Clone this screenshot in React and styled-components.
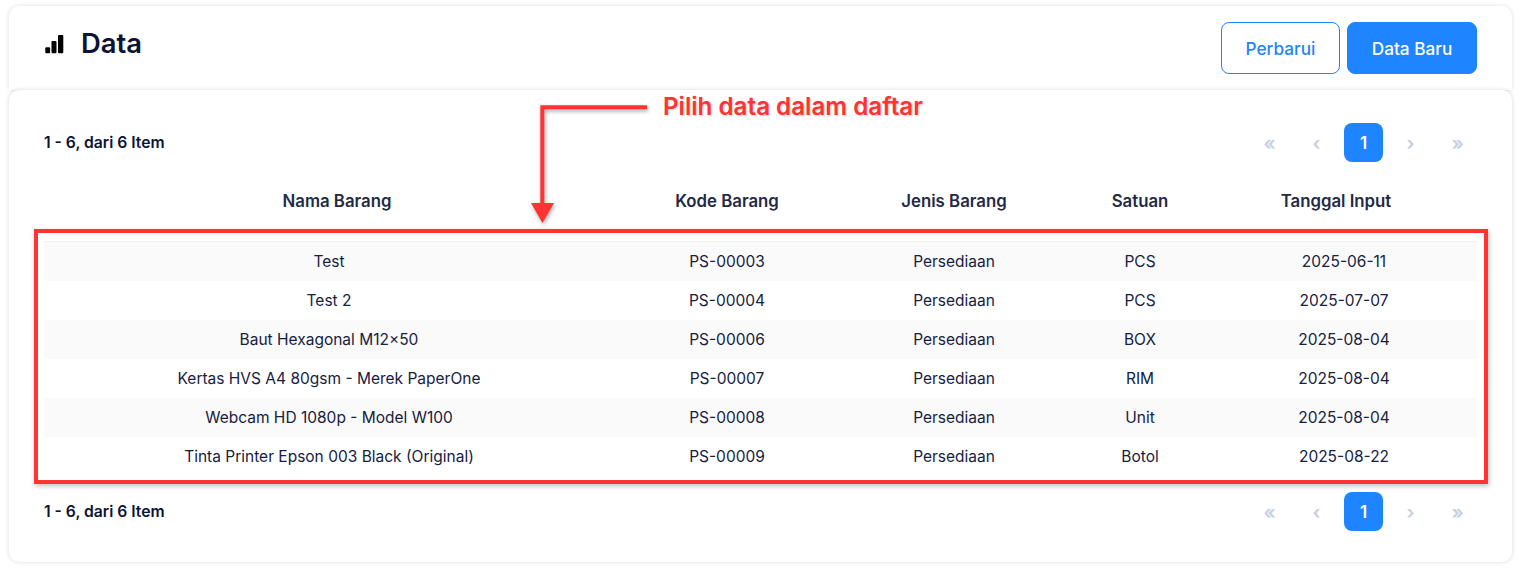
import React from 'react';
import styled, { createGlobalStyle } from 'styled-components';

const rows = [
  ['Test', 'PS-00003', 'Persediaan', 'PCS', '2025-06-11'],
  ['Test 2', 'PS-00004', 'Persediaan', 'PCS', '2025-07-07'],
  ['Baut Hexagonal M12×50', 'PS-00006', 'Persediaan', 'BOX', '2025-08-04'],
  ['Kertas HVS A4 80gsm - Merek PaperOne', 'PS-00007', 'Persediaan', 'RIM', '2025-08-04'],
  ['Webcam HD 1080p - Model W100', 'PS-00008', 'Persediaan', 'Unit', '2025-08-04'],
  ['Tinta Printer Epson 003 Black (Original)', 'PS-00009', 'Persediaan', 'Botol', '2025-08-22'],
];

const columns = ['Nama Barang', 'Kode Barang', 'Jenis Barang', 'Satuan', 'Tanggal Input'];

const Pager = () => (
  <PagerWrap>
    <PagerInfo>1 - 6, dari 6 Item</PagerInfo>
    <PagerButtons>
      <PagerArrow>«</PagerArrow>
      <PagerArrow>‹</PagerArrow>
      <PagerPage>1</PagerPage>
      <PagerArrow>›</PagerArrow>
      <PagerArrow>»</PagerArrow>
    </PagerButtons>
  </PagerWrap>
);

const App = () => {
  return (
    <>
      <GlobalStyle />
      <Page>
        <CardHeader>
          <Title>
            <svg width='19' height='20' viewBox='0 0 19 20' fill='#000'>
              <rect x='0.3' y='13.3' width='4.8' height='6' rx='1' />
              <rect x='6.5' y='7' width='5' height='12.3' rx='1' />
              <rect x='13' y='1' width='5.3' height='18.3' rx='1' />
            </svg>
            <h1>Data</h1>
          </Title>
          <Actions>
            <OutlineButton>Perbarui</OutlineButton>
            <SolidButton>Data Baru</SolidButton>
          </Actions>
        </CardHeader>
        <CardBody>
          <Pager />
          <HeadRow>
            {columns.map((name) => (
              <span key={name}>{name}</span>
            ))}
          </HeadRow>
          <TableBody>
            {rows.map((row) => (
              <BodyRow key={row[1]}>
                {row.map((cell, i) => (
                  <span key={i}>{cell}</span>
                ))}
              </BodyRow>
            ))}
          </TableBody>
          <Pager />
        </CardBody>
        <HighlightBox />
        <ArrowSvg width='140' height='150' viewBox='0 0 140 150'>
          <path d='M127 17.300H22.300V115' fill='none' stroke='#ff3333' strokeWidth='4' />
          <path d='M11 113H34L22.500 133Z' fill='#ff3333' />
        </ArrowSvg>
        <Note>Pilih data dalam daftar</Note>
      </Page>
    </>
  );
};

export default App;

const GlobalStyle = createGlobalStyle`
  html, body {
    margin: 0;
    background: #fff;
    font-family: Inter, "Liberation Sans", sans-serif;
    color: #0f1b3d;
  }
`;

const Page = styled.div`
  position: relative;
  width: 1521px;
  height: 569px;
  padding: 6px 9px 7px;
  box-sizing: border-box;
  overflow: hidden;
  display: flex;
  flex-direction: column;
`;

const CardHeader = styled.div`
  height: 84px;
  box-sizing: border-box;
  padding: 16px 35px 0 36px;
  border-radius: 10px 10px 0 0;
  box-shadow: 0 0 4px rgba(0, 0, 0, 0.14);
  display: flex;
  justify-content: space-between;
  align-items: flex-start;
`;

const Title = styled.div`
  display: flex;
  align-items: center;
  gap: 17px;
  height: 44px;
  h1 {
    margin: -2px 0 0;
    font-size: 27.4px;
    font-weight: 600;
    color: #0b1437;
  }
`;

const Actions = styled.div`
  display: flex;
  gap: 7px;
`;

const OutlineButton = styled.button`
  width: 119px;
  height: 52px;
  border: 1px solid #1e84ff;
  border-radius: 8px;
  background: #fff;
  color: #1e84ff;
  font: 500 17.2px Inter, sans-serif;
`;

const SolidButton = styled(OutlineButton)`
  width: 130px;
  background: #1e84ff;
  color: #fff;
`;

const CardBody = styled.div`
  position: relative;
  height: 472px;
  box-sizing: border-box;
  padding: 33px 35px 0;
  border-radius: 10px;
  background: #fff;
  box-shadow: 0 0 4px rgba(0, 0, 0, 0.16);
  display: flex;
  flex-direction: column;
`;

const PagerWrap = styled.div`
  display: flex;
  justify-content: space-between;
  align-items: center;
  height: 39px;
`;

const PagerInfo = styled.div`
  font-size: 15.7px;
  font-weight: 600;
  color: #0b1437;
`;

const PagerButtons = styled.div`
  display: flex;
  gap: 8px;
`;

const PagerArrow = styled.div`
  width: 39px;
  height: 39px;
  display: flex;
  align-items: center;
  justify-content: center;
  color: #c9d0e3;
  font-size: 18.5px;
  font-weight: 700;
`;

const PagerPage = styled(PagerArrow)`
  border-radius: 8px;
  background: #1e84ff;
  color: #fff;
  font-size: 17px;
  font-weight: 600;
`;

const HeadRow = styled.div`
  display: grid;
  grid-template-columns: 586px 194px 260px 112px 280px;
  margin-top: 20px;
  height: 38px;
  align-items: center;
  text-align: center;
  font-size: 16.8px;
  font-weight: 600;
  color: #1f2a44;
`;

const TableBody = styled.div`
  margin-top: 21px;
  border-top: 1px solid #f0f0f0;
  margin-bottom: 16px;
`;

const BodyRow = styled.div`
  display: grid;
  grid-template-columns: 570px 226px 228px 144px 264px;
  height: 39px;
  align-items: center;
  text-align: center;
  font-size: 15.5px;
  color: #16213f;
  &:nth-child(odd) {
    background: #fafafa;
  }
`;

const HighlightBox = styled.div`
  position: absolute;
  left: 34px;
  top: 229px;
  width: 1454px;
  height: 255px;
  box-sizing: border-box;
  border: 4px solid #ff3333;
  box-shadow: 1px 2px 5px rgba(0, 0, 0, 0.25);
`;

const ArrowSvg = styled.svg`
  position: absolute;
  left: 520px;
  top: 90px;
  filter: drop-shadow(1px 2px 2px rgba(0, 0, 0, 0.35));
`;

const Note = styled.div`
  position: absolute;
  left: 663px;
  top: 92px;
  font-size: 24.2px;
  font-weight: 600;
  line-height: 30px;
  color: #ff3333;
  text-shadow: 1px 1px 2px rgba(0, 0, 0, 0.2);
`;
